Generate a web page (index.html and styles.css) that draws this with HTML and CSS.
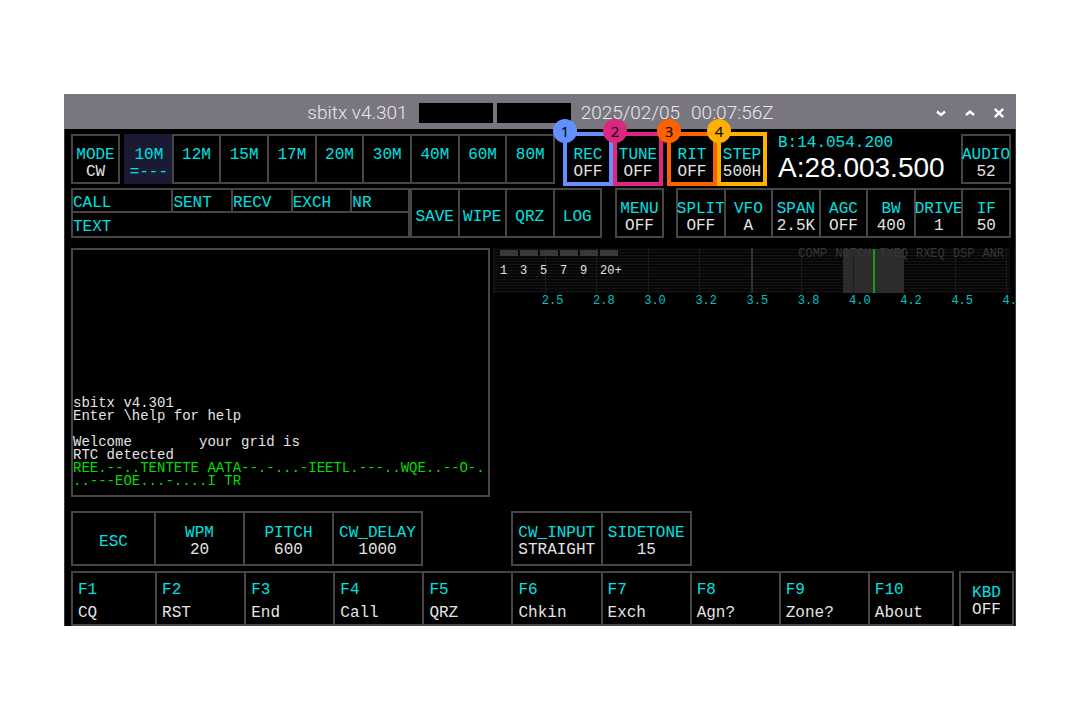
FILE: index.html
```html
<!DOCTYPE html>
<html lang="en">
<head>
<meta charset="utf-8">
<title>sbitx v4.301</title>
<link rel="stylesheet" href="styles.css">
</head>
<body>
<main class="window">
  <header class="titlebar">
    <h1 class="title"><span>sbitx v4.301</span><span class="redacted first"></span><span class="redacted"></span><span class="date">2025/02/05</span><time>00:07:56Z</time></h1>
    <div class="window-controls">
      <button type="button" aria-label="Minimize"><svg viewBox="0 0 12 12"><path d="M2 4.500l4 3.500 4-3.500"/></svg></button>
      <button type="button" aria-label="Maximize"><svg viewBox="0 0 12 12"><path d="M2 8l4-3.500 4 3.500"/></svg></button>
      <button type="button" aria-label="Close"><svg viewBox="0 0 12 12"><path d="M1.800 1.800l8.400 8.400M10.200 1.800l-8.400 8.400"/></svg></button>
    </div>
  </header>
  <div class="content">
    <section class="row top">
      <div class="group mode"><button type="button" class="cell"><b>MODE</b><i>CW</i></button></div>
      <div class="group bands">
        <button type="button" class="cell active"><b>10M</b><b>=---</b></button>
        <button type="button" class="cell"><b>12M</b><i></i></button>
        <button type="button" class="cell"><b>15M</b><i></i></button>
        <button type="button" class="cell"><b>17M</b><i></i></button>
        <button type="button" class="cell"><b>20M</b><i></i></button>
        <button type="button" class="cell"><b>30M</b><i></i></button>
        <button type="button" class="cell"><b>40M</b><i></i></button>
        <button type="button" class="cell"><b>60M</b><i></i></button>
        <button type="button" class="cell"><b>80M</b><i></i></button>
      </div>
      <div class="group marked-pair rec-tune">
        <button type="button" class="marked blue"><b>REC</b><i>OFF</i><span class="badge">1</span></button>
        <button type="button" class="marked pink"><b>TUNE</b><i>OFF</i><span class="badge">2</span></button>
      </div>
      <div class="group marked-pair rit-step">
        <button type="button" class="marked orange"><b>RIT</b><i>OFF</i><span class="badge">3</span></button>
        <button type="button" class="marked amber"><b>STEP</b><i>500H</i><span class="badge">4</span></button>
      </div>
      <div class="vfo"><span class="vfo-b">B:14.054.200</span><span class="vfo-a">A:28.003.500</span></div>
      <div class="group audio"><button type="button" class="cell"><b>AUDIO</b><i>52</i></button></div>
    </section>

    <section class="row second">
      <div class="fields">
        <label>CALL<input type="text"></label>
        <label>SENT<input type="text"></label>
        <label>RECV<input type="text"></label>
        <label>EXCH<input type="text"></label>
        <label>NR<input type="text"></label>
        <label class="wide">TEXT<input type="text"></label>
      </div>
      <div class="group actions">
        <button type="button" class="cell"><b>SAVE</b></button>
        <button type="button" class="cell"><b>WIPE</b></button>
        <button type="button" class="cell"><b>QRZ</b></button>
        <button type="button" class="cell"><b>LOG</b></button>
      </div>
      <div class="group menu"><button type="button" class="cell"><b>MENU</b><i>OFF</i></button></div>
      <div class="group settings">
        <button type="button" class="cell"><b>SPLIT</b><i>OFF</i></button>
        <button type="button" class="cell"><b>VFO</b><i>A</i></button>
        <button type="button" class="cell"><b>SPAN</b><i>2.5K</i></button>
        <button type="button" class="cell"><b>AGC</b><i>OFF</i></button>
        <button type="button" class="cell"><b>BW</b><i>400</i></button>
        <button type="button" class="cell"><b>DRIVE</b><i>1</i></button>
        <button type="button" class="cell"><b>IF</b><i>50</i></button>
      </div>
    </section>

    <section class="row main">
      <div class="console">
        <p>sbitx v4.301</p>
        <p>Enter \help for help</p>
        <p>&nbsp;</p>
        <p>Welcome        your grid is</p>
        <p>RTC detected</p>
        <p class="decoded">REE.--..TENTETE AATA--.-...-IEETL.---..WQE..--O-.</p>
        <p class="decoded">..---EOE...-....I TR</p>
      </div>
      <div class="spectrum">
        <div class="plot">
          <svg class="grid" viewBox="0 0 517 45" preserveAspectRatio="none" aria-hidden="true">
            <defs><pattern id="lines" width="517" height="3" patternUnits="userSpaceOnUse"><rect y="1" width="517" height="1" fill="#131313"/></pattern></defs>
            <rect width="517" height="45" fill="#060606"/>
            <rect width="517" height="45" fill="url(#lines)"/>
            <path class="v" d="M1 0v45M52.500 0v45M103.500 0v45M155.500 0v45M206.500 0v45M308.500 0v45M462.500 0v45M513.500 0v45"/>
            <path class="mid" d="M259 0v45"/>
            <rect x="350" y="1" width="61" height="44" fill="#303030" fill-opacity=".9"/>
            <path class="v" d="M360.500 1v44"/>
            <path class="tuned" d="M381 1v44"/>
          </svg>
          <div class="flags"><span>COMP</span><span>NOTCH</span><span>TXEQ</span><span>RXEQ</span><span>DSP</span><span>ANR</span></div>
          <div class="meter"><span>1</span><span>3</span><span>5</span><span>7</span><span>9</span><span>20+</span></div>
        </div>
        <div class="scale"><span>2.5</span><span>2.8</span><span>3.0</span><span>3.2</span><span>3.5</span><span>3.8</span><span>4.0</span><span>4.2</span><span>4.5</span><span>4.8</span></div>
      </div>
    </section>

    <section class="row cw">
      <div class="group keyer">
        <button type="button" class="cell narrow"><b>ESC</b></button>
        <button type="button" class="cell"><b>WPM</b><i>20</i></button>
        <button type="button" class="cell"><b>PITCH</b><i>600</i></button>
        <button type="button" class="cell"><b>CW_DELAY</b><i>1000</i></button>
      </div>
      <div class="group input">
        <button type="button" class="cell"><b>CW_INPUT</b><i>STRAIGHT</i></button>
        <button type="button" class="cell"><b>SIDETONE</b><i>15</i></button>
      </div>
      <div class="rest"></div>
    </section>

    <section class="row macros">
      <div class="group keys">
        <button type="button" class="cell narrow"><b>F1</b><i>CQ</i></button>
        <button type="button" class="cell"><b>F2</b><i>RST</i></button>
        <button type="button" class="cell"><b>F3</b><i>End</i></button>
        <button type="button" class="cell"><b>F4</b><i>Call</i></button>
        <button type="button" class="cell"><b>F5</b><i>QRZ</i></button>
        <button type="button" class="cell"><b>F6</b><i>Chkin</i></button>
        <button type="button" class="cell"><b>F7</b><i>Exch</i></button>
        <button type="button" class="cell"><b>F8</b><i>Agn?</i></button>
        <button type="button" class="cell"><b>F9</b><i>Zone?</i></button>
        <button type="button" class="cell narrow"><b>F10</b><i>About</i></button>
      </div>
      <div class="group kbd"><button type="button" class="cell"><b>KBD</b><i>OFF</i></button></div>
    </section>
  </div>
</main>
</body>
</html>
```
FILE: styles.css
```css
:root {
  --line: #464646;
  --cyan: #00e0e0;
  --white: #e4e4e4;
}

* { box-sizing: border-box; }

body {
  margin: 0;
  padding: 94px 64px;
  background: #fff;
  color: var(--white);
  font: 16px/17px "Liberation Mono", monospace;
}

button {
  margin: 0;
  padding: 0;
  border: 0;
  border-radius: 0;
  background: none;
  color: inherit;
  font: inherit;
}

.window { background: #000; }

/* Title bar */
.titlebar {
  display: grid;
  grid-template-columns: 1fr auto 1fr;
  align-items: center;
  height: 35px;
  padding-right: 9px;
  background: #79767f;
}

.title {
  grid-column: 2;
  display: flex;
  align-items: center;
  margin: 0;
  padding: 3px 0 0 10px;
  color: #e8e8ea;
  font: 300 19px/24px Roboto, sans-serif;
}

.redacted {
  width: 74px;
  height: 20px;
  margin-left: 4px;
  background: #000;
}
.redacted.first { margin-left: 11px; }
.date { margin: 0 11px 0 10px; }

.window-controls {
  justify-self: end;
  display: flex;
  gap: 13px;
  padding-top: 3px;
}
.window-controls button {
  display: flex;
  width: 16px;
  height: 16px;
  align-items: center;
  justify-content: center;
}
.window-controls svg {
  width: 12px;
  height: 12px;
  fill: none;
  stroke: #fff;
  stroke-width: 2.400;
}

/* Control rows */
.content {
  padding: 5px 0 0 6px;
  border: solid #3a3a3a;
  border-width: 0 1px;
}
.row {
  display: flex;
  padding-right: 4px;
}
.group {
  display: flex;
  min-width: 0;
}
.cell {
  display: flex;
  flex: 1 1 0;
  min-width: 0;
  flex-direction: column;
  align-items: center;
  justify-content: center;
  padding-top: 7px;
  border: 2px solid var(--line);
}
.cell + .cell { margin-left: -2px; }
.cell b, .marked b {
  color: var(--cyan);
  font-weight: 400;
}
.cell i, .marked i {
  min-height: 17px;
  font-style: normal;
}
.cell.active {
  border-color: #1a1a33;
  background: #1a1a33;
}

.top, .second { min-height: 50px; }
.top .cell, .second .cell { padding-top: 9px; }
.second { margin-top: 4px; }

.mode { flex: 49 1 0; }
.bands { flex: 431 1 0; margin-left: 4px; }
.rec-tune { flex: 100 1 0; margin-left: 8px; }
.rit-step { flex: 100 1 0; margin-left: 4px; }
.vfo { flex: 183 1 0; margin-left: 10px; }
.audio { flex: 50 1 0; }

.marked-pair { margin-top: -2px; margin-bottom: -2px; }
.marked {
  position: relative;
  display: flex;
  flex: 1 1 0;
  min-width: 0;
  flex-direction: column;
  align-items: center;
  justify-content: center;
  padding-top: 9px;
  border: 4px solid var(--mark);
}
.blue { --mark: #648fff; }
.pink { --mark: #dc267f; }
.orange { --mark: #fe6100; }
.amber { --mark: #ffb000; }
.badge {
  position: absolute;
  top: -17px;
  left: -14px;
  width: 24px;
  height: 24px;
  border-radius: 50%;
  background: var(--mark);
  color: #000;
  font: 15px/24px "Noto Sans", sans-serif;
  text-align: center;
}

.vfo {
  display: flex;
  flex-direction: column;
  padding: 1px 0 0 1px;
  white-space: nowrap;
}
.vfo-b { color: var(--cyan); }
.vfo-a {
  color: #fff;
  font: 28px/32px "Liberation Sans", sans-serif;
}

/* Contact fields */
.fields {
  flex: 337 1 0;
  display: grid;
  grid-template-columns: 101fr 60fr 60fr 60fr 58fr;
  grid-template-rows: 1fr 1fr;
  min-width: 0;
  border: solid var(--line);
  border-width: 2px 0 2px 2px;
}
.fields label {
  display: flex;
  min-width: 0;
  align-items: center;
  padding-top: 5px;
  border-right: 2px solid var(--line);
  border-bottom: 2px solid var(--line);
  color: var(--cyan);
  line-height: 16px;
}
.fields .wide {
  grid-column: 1 / -1;
  border-bottom: 0;
}
.fields input {
  flex: 1 1 0;
  min-width: 0;
  height: 16px;
  padding: 0;
  border: 0;
  outline: 0;
  background: none;
  color: var(--white);
  font: inherit;
}

.actions { flex: 192 1 0; }
.menu { flex: 49 1 0; margin-left: 13px; }
.settings { flex: 335 1 0; margin-left: 12px; }

/* Console and spectrum */
.main {
  min-height: 249px;
  margin-top: 10px;
  padding-right: 0;
}
.console {
  display: flex;
  flex: 415 1 0;
  min-width: 0;
  flex-direction: column;
  justify-content: flex-end;
  padding-bottom: 7px;
  border: 2px solid var(--line);
  font-size: 14px;
  line-height: 13px;
  white-space: pre;
}
.console p { margin: 0; }
.decoded { color: #00dc00; }

.spectrum {
  flex: 522 1 0;
  min-width: 0;
  margin-left: 3px;
  overflow: hidden;
  font-size: 12px;
  line-height: 14px;
}
.plot {
  display: grid;
  height: 45px;
  margin-right: 5px;
}
.plot > * { grid-area: 1 / 1; }
.grid { width: 100%; height: 45px; }
.grid path { fill: none; stroke: #1a1a1a; }
.grid .mid { stroke: #303030; stroke-width: 2; }
.grid .tuned { stroke: #14a014; stroke-width: 2; }
.flags {
  display: flex;
  justify-content: flex-end;
  gap: 8px;
  padding-right: 6px;
  color: #363636;
  line-height: 12px;
}
.meter {
  display: flex;
  gap: 2px;
  padding: 2px 0 0 7px;
}
.meter span {
  width: 18px;
  padding-top: 14px;
  background: linear-gradient(#383838, #383838) top / 100% 6px no-repeat;
}
.scale {
  display: grid;
  grid-template-columns: repeat(10, 1fr);
  margin: 1px -24px 0 34px;
  color: #00c4c4;
  text-align: center;
}

/* Keyer and function keys */
.cw {
  min-height: 55px;
  margin-top: 14px;
}
.keyer { flex: 352 1 0; }
.input { flex: 181 1 0; margin-left: 88px; }
.rest { flex: 319 1 0; }
.keyer .cell { flex-grow: 87; }
.keyer .cell.narrow { flex-grow: 81; }

.macros {
  min-height: 55px;
  margin-top: 5px;
  padding-right: 1px;
}
.keys { flex: 883 1 0; }
.keys .cell {
  flex-grow: 82;
  align-items: flex-start;
  gap: 6px;
  padding: 7px 0 0 5px;
}
.keys .cell.narrow { flex-grow: 77; }
.kbd { flex: 55 1 0; margin-left: 5px; }
```
